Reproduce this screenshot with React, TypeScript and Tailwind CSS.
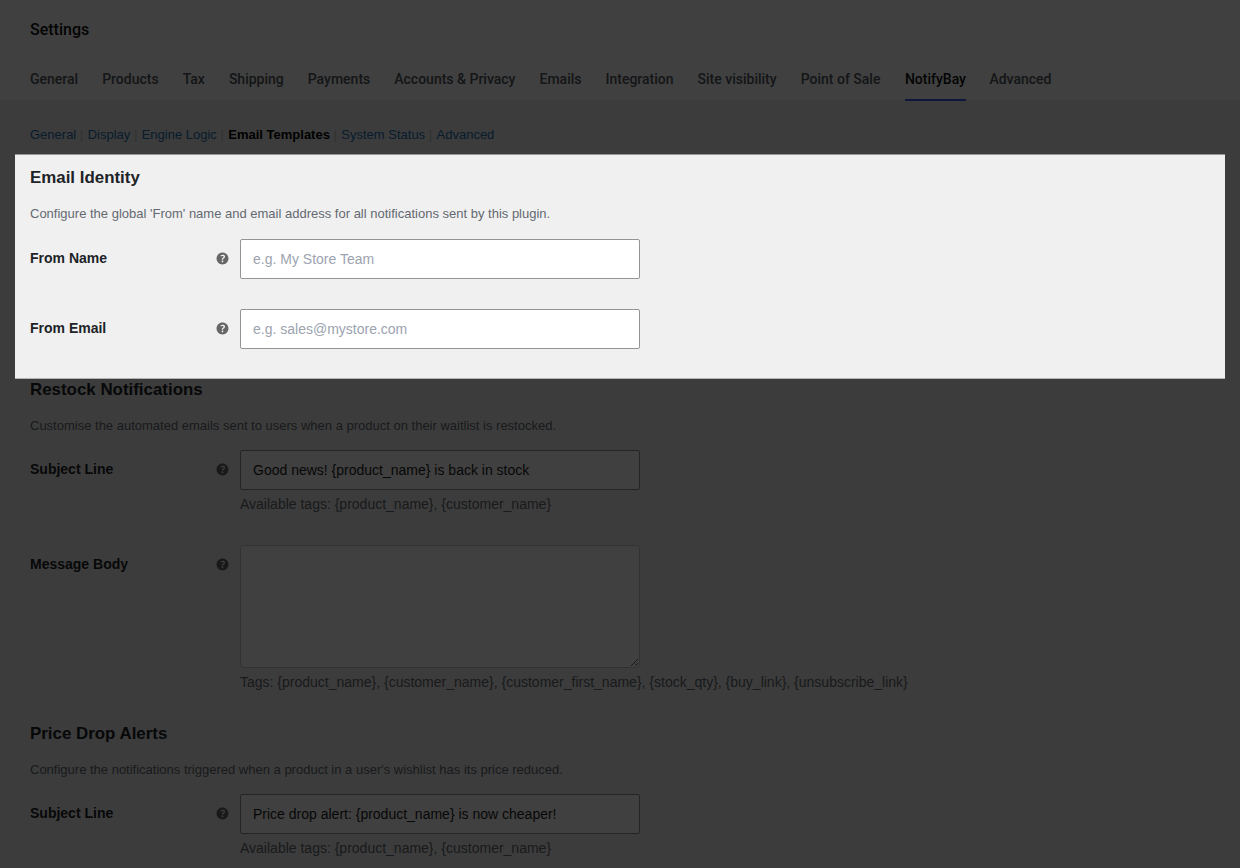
import type { ReactNode } from "react";

const tabs = [
  "General",
  "Products",
  "Tax",
  "Shipping",
  "Payments",
  "Accounts & Privacy",
  "Emails",
  "Integration",
  "Site visibility",
  "Point of Sale",
  "NotifyBay",
  "Advanced",
];

const sections = ["General", "Display", "Engine Logic", "Email Templates", "System Status", "Advanced"];

function HelpTip() {
  return (
    <svg viewBox="0 0 20 20" className="w-[17px] h-[17px] text-[#666]" fill="currentColor">
      <path d="M17 10c0-3.87-3.14-7-7-7-3.87 0-7 3.13-7 7s3.13 7 7 7c3.86 0 7-3.13 7-7zm-6.3 1.48H9.14v-.43c0-.38.08-.7.24-.98s.46-.57.88-.89c.41-.29.68-.53.81-.71.14-.18.2-.39.2-.62 0-.25-.09-.44-.28-.58-.19-.13-.45-.19-.79-.19-.58 0-1.25.19-2 .57l-.64-1.28c.87-.49 1.8-.74 2.77-.74.81 0 1.45.2 1.92.58.48.39.71.91.71 1.55 0 .43-.09.8-.29 1.11-.19.32-.57.67-1.11 1.06-.38.28-.61.49-.71.63-.1.15-.15.34-.15.57v.35zm-1.47 2.74c-.18-.17-.27-.42-.27-.73 0-.33.08-.58.26-.75s.43-.25.77-.25c.32 0 .57.09.75.26s.27.42.27.74c0 .3-.09.55-.27.72-.18.18-.43.27-.75.27-.33 0-.58-.09-.76-.26z" />
    </svg>
  );
}

function Heading({ title, description }: { title: string; description: string }) {
  return (
    <>
      <h2 className="text-[16.9px] leading-6 font-semibold text-[#1d2327]">{title}</h2>
      <p className="mt-[14px] text-[13px] leading-5 text-[#646970]">{description}</p>
    </>
  );
}

function Field({ label, hint, children }: { label: string; hint?: string; children: ReactNode }) {
  return (
    <div className="flex">
      <div className="flex w-[210px] h-[39px] shrink-0 items-center justify-between pr-[9px]">
        <label className="pb-[2px] text-sm font-semibold text-[#1d2327]">{label}</label>
        <HelpTip />
      </div>
      <div>
        {children}
        {hint && <p className="mt-1 text-sm leading-[21px] text-[#646970]">{hint}</p>}
      </div>
    </div>
  );
}

function TextInput({ value, placeholder }: { value?: string; placeholder?: string }) {
  return (
    <input
      type="text"
      defaultValue={value}
      placeholder={placeholder}
      className="block w-[400px] h-10 rounded-[2px] border border-[#949494] bg-white px-3 text-sm text-[#1e1e1e] placeholder:text-[#9ca3af]"
    />
  );
}

export default function App() {
  return (
    <div className="relative w-full h-[868px] overflow-hidden bg-[#f0f0f0] font-['Liberation_Sans',sans-serif]">
      <header className="h-[100px] bg-white px-[30px] font-[Roboto,sans-serif]">
        <h1 className="flex h-[59px] items-center text-base font-medium text-[#101010]">Settings</h1>
        <nav className="flex h-[42px] gap-6 text-sm font-medium">
          {tabs.map((tab) => (
            <a
              key={tab}
              className={
                tab === "NotifyBay"
                  ? "ml-[0.5px] mr-[-0.5px] border-b-2 border-[#3858e9] pt-[10px] text-[#101010]"
                  : "pt-[10px] text-[#50575e]"
              }
            >
              {tab}
            </a>
          ))}
        </nav>
      </header>

      <main className="px-[30px]">
        <ul className="flex gap-[0.8px] pt-[25px] text-[13px] leading-5">
          {sections.map((section, idx) => (
            <li key={section} className="whitespace-pre text-[#c3c4c7]">
              <a className={section === "Email Templates" ? "font-semibold text-black" : "text-[#2271b1]"}>
                {section}
              </a>
              {idx < sections.length - 1 && " | "}
            </li>
          ))}
        </ul>

        {/* Highlighted section, everything around it is dimmed */}
        <section className="relative mt-[9px] h-[225px] pt-3">
          <div className="pointer-events-none absolute inset-y-0 -inset-x-[15px] border-t border-b border-t-[#969696] border-b-[#b4b4b4] shadow-[0_0_0_2000px_rgba(0,0,0,0.75)] z-10" />
          <Heading
            title="Email Identity"
            description="Configure the global 'From' name and email address for all notifications sent by this plugin."
          />
          <div className="mt-[15px] space-y-[30px]">
            <Field label="From Name">
              <TextInput placeholder="e.g. My Store Team" />
            </Field>
            <Field label="From Email">
              <TextInput placeholder="e.g. sales@mystore.com" />
            </Field>
          </div>
        </section>

        <section className="-mt-px">
          <Heading
            title="Restock Notifications"
            description="Customise the automated emails sent to users when a product on their waitlist is restocked."
          />
          <div className="mt-[14px] space-y-[30px]">
            <Field label="Subject Line" hint="Available tags: {product_name}, {customer_name}">
              <TextInput value="Good news! {product_name} is back in stock" />
            </Field>
            <Field
              label="Message Body"
              hint="Tags: {product_name}, {customer_name}, {customer_first_name}, {stock_qty}, {buy_link}, {unsubscribe_link}"
            >
              <textarea className="block w-[400px] h-[123px] resize rounded-[4px] border border-[#c8c8ca] bg-white" />
            </Field>
          </div>
        </section>

        <section className="mt-[29px]">
          <Heading
            title="Price Drop Alerts"
            description="Configure the notifications triggered when a product in a user's wishlist has its price reduced."
          />
          <div className="mt-[14px]">
            <Field label="Subject Line" hint="Available tags: {product_name}, {customer_name}">
              <TextInput value="Price drop alert: {product_name} is now cheaper!" />
            </Field>
          </div>
        </section>
      </main>
    </div>
  );
}
